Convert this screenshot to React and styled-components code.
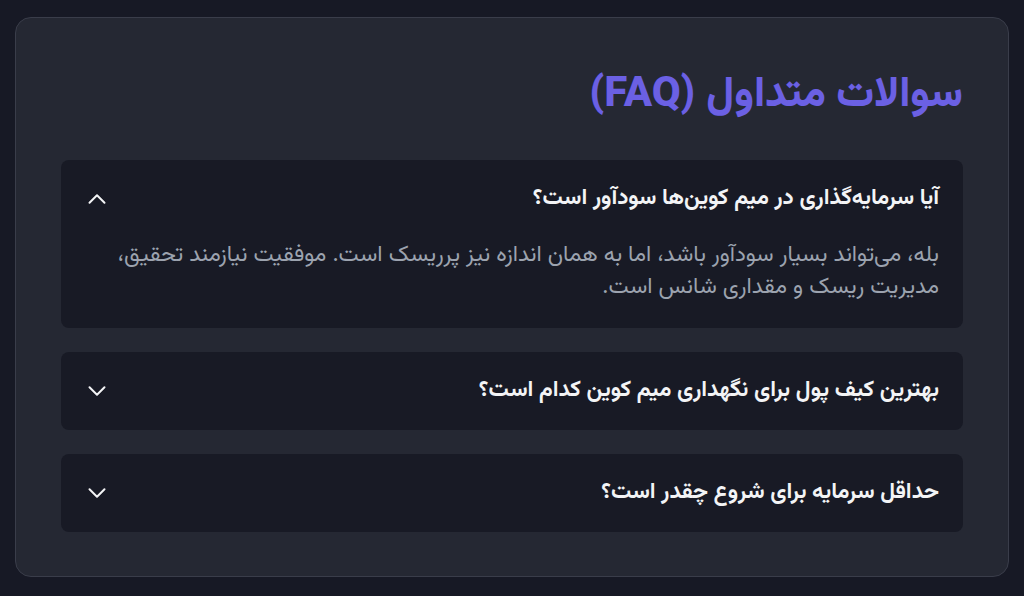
import { useState } from "react"
import styled, { createGlobalStyle } from "styled-components"

const GlobalStyle = createGlobalStyle`
    *{
        box-sizing: border-box;
    }
    body{
        margin: 0;
        background: #171925;
        font-family: "Vazirmatn", "Noto Sans Arabic", "DejaVu Sans", sans-serif;
    }
`

const faqs = [
    {
        id: 1,
        question: "آیا سرمایه‌گذاری در میم کوین‌ها سودآور است؟",
        answer: "بله، می‌تواند بسیار سودآور باشد، اما به همان اندازه نیز پرریسک است. موفقیت نیازمند تحقیق، مدیریت ریسک و مقداری شانس است.",
    },
    {
        id: 2,
        question: "بهترین کیف پول برای نگهداری میم کوین کدام است؟",
        answer: "کیف پول‌های نرم‌افزاری مانند متامسک و تراست ولت برای شروع مناسب هستند.",
    },
    {
        id: 3,
        question: "حداقل سرمایه برای شروع چقدر است؟",
        answer: "هیچ حداقلی وجود ندارد؛ فقط مبلغی را سرمایه‌گذاری کنید که توان از دست دادنش را دارید.",
    },
]

function Chevron({ open }) {
    return (
        <svg width="24" height="24" viewBox="0 0 24 24" fill="none" stroke="currentColor"
            strokeWidth="2" strokeLinecap="round" strokeLinejoin="round">
            {open
                ? <path d="M4.5 15.75 12 8.25l7.5 7.5" />
                : <path d="M19.5 8.25 12 15.75 4.5 8.25" />}
        </svg>
    )
}

function App() {
    const [openId, setOpenId] = useState(1)

    return (
        <>
            <GlobalStyle />
            <Section dir="rtl">
                <Heading>سوالات متداول (FAQ)</Heading>

                <List>
                    {faqs.map((item) => (
                        <Item key={item.id}>
                            <Question onClick={() => setOpenId(openId === item.id ? null : item.id)}>
                                <span>{item.question}</span>
                                <Chevron open={openId === item.id} />
                            </Question>
                            {openId === item.id && <Answer>{item.answer}</Answer>}
                        </Item>
                    ))}
                </List>
            </Section>
        </>
    )
}

const Section = styled.section`
    margin: 17px 15px 0;
    padding: 46px 45px 44px;
    background: #252833;
    border: 1px solid #3a3d4a;
    border-radius: 16px;
`

const Heading = styled.h2`
    margin: 3px 0 35px;
    font-size: 42px;
    line-height: 58px;
    font-weight: 800;
    color: #6b60e4;
`

const List = styled.div`
    display: flex;
    flex-direction: column;
    gap: 24px;
`

const Item = styled.div`
    background: #181a25;
    border-radius: 8px;
    overflow: hidden;
`

const Question = styled.button`
    width: 100%;
    display: flex;
    align-items: center;
    justify-content: space-between;
    padding: 24px;
    background: none;
    border: 0;
    color: #f3f4f6;
    font-family: inherit;
    font-size: 22.4px;
    font-weight: 700;
    line-height: 30px;
    text-align: right;
    cursor: pointer;
`

const Answer = styled.p`
    margin: 0;
    padding: 2px 24px 24px;
    color: #9ca3af;
    font-size: 22.6px;
    line-height: 32px;
`

export default App
